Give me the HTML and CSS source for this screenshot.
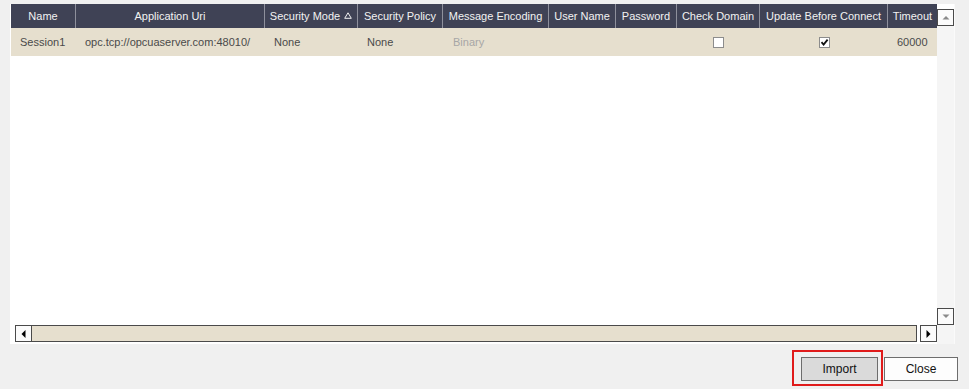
FILE: index.html
```html
<!DOCTYPE html>
<html lang="en">
<head>
    <meta charset="UTF-8">
    <title>Import Sessions</title>
    <link rel="stylesheet" href="styles.css">
</head>
<body>
    <div class="grid-wrap">
        <div class="grid">
            <!-- column headers -->
            <div class="row header">
                <div class="hcell">Name</div>
                <div class="hcell">Application Uri</div>
                <div class="hcell">Security Mode
                    <svg class="sort" width="8" height="7" viewBox="0 0 8 7"><polygon points="4,0.8 7.3,6.3 0.7,6.3" fill="none" stroke="#f2f2f2" stroke-width="1"/></svg>
                </div>
                <div class="hcell">Security Policy</div>
                <div class="hcell">Message Encoding</div>
                <div class="hcell">User Name</div>
                <div class="hcell">Password</div>
                <div class="hcell">Check Domain</div>
                <div class="hcell">Update Before Connect</div>
                <div class="hcell last">Timeout</div>
            </div>

            <!-- data -->
            <div class="row data">
                <div class="cell">Session1</div>
                <div class="cell">opc.tcp://opcuaserver.com:48010/</div>
                <div class="cell">None</div>
                <div class="cell">None</div>
                <div class="cell muted">Binary</div>
                <div class="cell"></div>
                <div class="cell"></div>
                <div class="cell center"><span class="check"></span></div>
                <div class="cell center">
                    <span class="check">
                        <svg width="9" height="9" viewBox="0 0 9 9"><path d="M1.5 4.2 L3.6 6.6 L7.6 1.6" fill="none" stroke="#111" stroke-width="1.8"/></svg>
                    </span>
                </div>
                <div class="cell">60000</div>
            </div>

            <div class="empty"></div>

            <!-- horizontal scrollbar -->
            <div class="hscroll">
                <div class="sbtn">
                    <svg width="5" height="8" viewBox="0 0 5 8"><polygon points="4.5,0 4.5,8 0.5,4" fill="#000"/></svg>
                </div>
                <div class="hthumb"></div>
                <div class="sbtn right">
                    <svg width="5" height="8" viewBox="0 0 5 8"><polygon points="0.5,0 0.5,8 4.5,4" fill="#000"/></svg>
                </div>
            </div>
        </div>

        <!-- vertical scrollbar -->
        <div class="vscroll">
            <div class="vtop"></div>
            <div class="sbtn">
                <svg width="8" height="5" viewBox="0 0 8 5"><polygon points="0.5,4.5 7.5,4.5 4,1" fill="#8a8a8a"/></svg>
            </div>
            <div class="vtrack"></div>
            <div class="sbtn">
                <svg width="8" height="5" viewBox="0 0 8 5"><polygon points="0.5,0.5 7.5,0.5 4,4" fill="#8a8a8a"/></svg>
            </div>
            <div class="vcorner"></div>
        </div>
    </div>

    <div class="footer">
        <div class="focus">
            <button class="btn import">Import</button>
        </div>
        <button class="btn close">Close</button>
    </div>
</body>
</html>
```

FILE: styles.css
```css
body {
    margin: 0;
    padding: 4px 0 0 10px;
    background: #f0f0f0;
    font-family: 'Liberation Sans', Arial, sans-serif;
    font-size: 11px;
    width: 969px;
    height: 389px;
    box-sizing: border-box;
    overflow: hidden;
}
.grid-wrap {
    display: flex;
    height: 340px;
}
.grid {
    width: 927px;
    padding-left: 1px;
    box-sizing: border-box;
    background: #fff;
    display: flex;
    flex-direction: column;
}
.row {
    display: grid;
    grid-template-columns: 65px 189px 93px 85px 106px 67px 61px 83px 128px 49px;
}
.header {
    height: 24px;
    background: #3f4255;
    color: #f2f2f2;
}
.hcell {
    display: flex;
    align-items: center;
    justify-content: center;
    border-right: 1px solid #8e909c;
    white-space: nowrap;
    overflow: hidden;
}
.hcell.last {
    border-right: none;
}
.sort {
    margin-left: 4px;
    margin-bottom: 2px;
}
.data {
    height: 28px;
    background: #e6dfce;
    color: #4a4a4a;
}
.cell {
    display: flex;
    align-items: center;
    padding-left: 9px;
    white-space: nowrap;
    overflow: hidden;
}
.cell.muted {
    color: #a6a6a6;
    padding-left: 10px;
}
.cell.center {
    justify-content: center;
    padding-left: 0;
}
.check {
    width: 11px;
    height: 11px;
    box-sizing: border-box;
    border: 1px solid #8c8c8c;
    background: #fff;
    display: flex;
    align-items: center;
    justify-content: center;
}
.empty {
    flex: 1;
}
.hscroll {
    display: flex;
    height: 17px;
    margin: 0 0 2px 4px;
}
.sbtn {
    width: 17px;
    height: 17px;
    box-sizing: border-box;
    border: 1px solid #4a4a4a;
    background: #fbfbfb;
    display: flex;
    align-items: center;
    justify-content: center;
    flex-shrink: 0;
}
.sbtn.right {
    margin-left: 3px;
}
.hthumb {
    flex: 1;
    border: 1px solid #4a4a4a;
    border-left: none;
    background: #e6dfce;
}
.vscroll {
    width: 17px;
    display: flex;
    flex-direction: column;
    background: #f5f5f5;
    border-right: 1px solid #fafafa;
}
.vtop {
    height: 5px;
    background: #fff;
}
.vtrack {
    flex: 1;
}
.vcorner {
    height: 19px;
}
.footer {
    display: flex;
    justify-content: flex-end;
    align-items: flex-start;
    padding: 6px 11px 0 0;
}
.focus {
    border: 2px solid #e01b1b;
    padding: 5px 3px 3px 7px;
}
.btn {
    font-family: 'Liberation Sans', Arial, sans-serif;
    font-size: 12px;
    color: #111;
    height: 24px;
    border: 1px solid #6d6d6d;
    border-radius: 0;
    padding: 0;
    cursor: pointer;
}
.import {
    width: 77px;
    background: #dadada;
}
.close {
    width: 74px;
    margin: 7px 0 0 1px;
    background: #fdfdfd;
}
```
